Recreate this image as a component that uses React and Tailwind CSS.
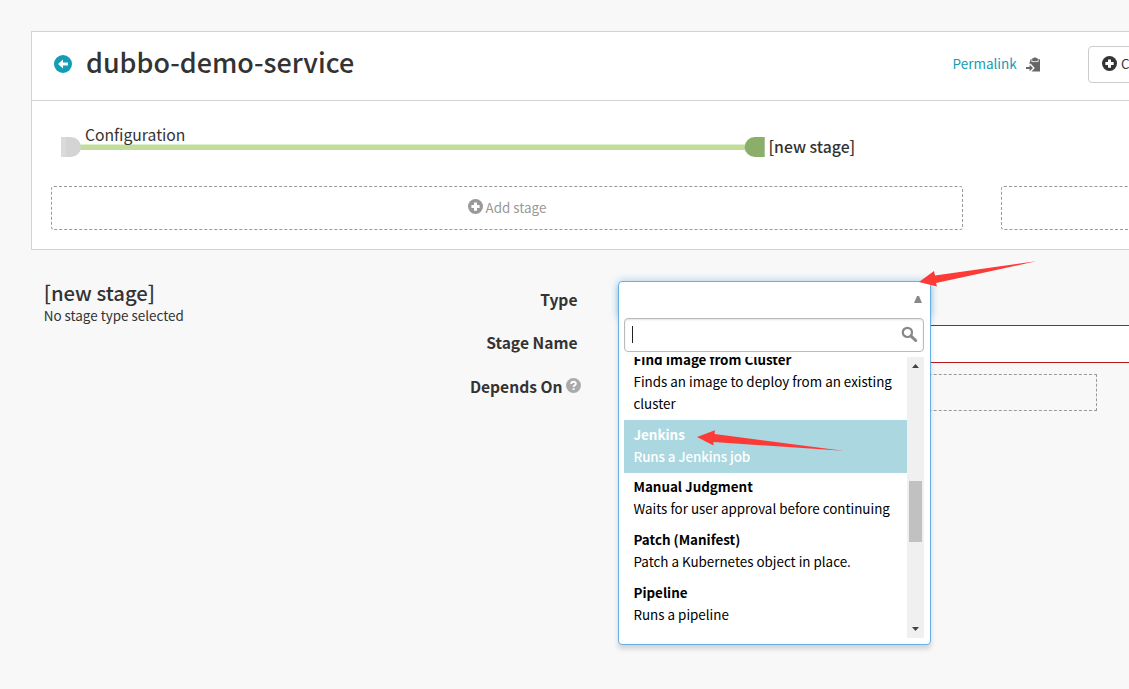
import React from "react";

const stages = [
  { name: "Find Image from Cluster", text: "Finds an image to deploy from an existing cluster" },
  { name: "Jenkins", text: "Runs a Jenkins job", active: true },
  { name: "Manual Judgment", text: "Waits for user approval before continuing" },
  { name: "Patch (Manifest)", text: "Patch a Kubernetes object in place." },
  { name: "Pipeline", text: "Runs a pipeline" },
];

function CircleIcon({ className, children }) {
  return (
    <svg viewBox="0 0 16 16" className={className}>
      <circle cx="8" cy="8" r="8" fill="currentColor" />
      {children}
    </svg>
  );
}

function Plus() {
  return <path d="M6.4 3.6h3.2v2.8h2.8v3.2H9.6v2.8H6.4V9.6H3.6V6.4h2.8z" fill="#fff" />;
}

function ClipboardIcon() {
  return (
    <svg viewBox="0 0 15 15" className="h-[15px] w-[15px] shrink-0">
      <path d="M4.6 2.2h1.6V1.3h1.3L8 .4h2l.6.9h1.2v.9H14V14.5H5.6L8.8 11 4.6 6.6 3.2 7z" fill="#666" />
      <path d="M5.8 2.6v2h6.4v-2" fill="none" stroke="#fff" strokeWidth=".8" />
      <path d="M0 10h3.6V7.8L7 11l-3.4 3.2V12H0z" fill="#666" />
    </svg>
  );
}

function Header() {
  return (
    <header className="flex h-[69px] items-center border-b border-[#d2d2d2] pb-[4px] pl-[22px]">
      <CircleIcon className="h-[18px] w-[18px] shrink-0 text-[#139cb6]">
        <path d="M8 4 3.6 8 8 12V9.3h4.4V6.7H8z" fill="#fff" />
      </CircleIcon>
      <h1 className="ml-[14px] w-[866.5px] shrink-0 pb-[4px] text-[26.9px] font-medium text-[#333]">dubbo-demo-service</h1>
      <span className="w-[73.5px] shrink-0 pb-[2px] text-[13.5px] text-[#139cb6]">Permalink</span>
      <ClipboardIcon />
      <button className="ml-[47px] flex h-[37px] w-[120px] shrink-0 items-center gap-[4px] rounded-[4px] border border-[#ccc] pb-[2px] pl-[13px] text-[13.4px] text-[#333]">
        <CircleIcon className="h-[15px] w-[15px] shrink-0">
          <Plus />
        </CircleIcon>
        Create
      </button>
    </header>
  );
}

function Graph() {
  return (
    <svg width="1098" height="85" viewBox="32 101 1098 85" className="block shrink-0">
      <path d="M80 147.3H746" stroke="#c0dd9b" strokeWidth="5.4" />
      <path d="M61 137h10a10 10 0 0 1 0 20H61z" fill="#d4d4d4" />
      <path d="M61 137h5v20h-5z" fill="#dadada" />
      <path d="M764.7 137h-10a10 10 0 0 0 0 20h10z" fill="#8bae6a" />
      <text x="85" y="141" fontSize="15.7" fill="#333">Configuration</text>
      <text x="768.5" y="153" fontSize="15.8" fontWeight="500" fill="#333">[new stage]</text>
    </svg>
  );
}

function Pipeline() {
  return (
    <section className="flex h-[219px] w-[1110px] flex-col border border-[#d2d2d2] bg-white">
      <Header />
      <Graph />
      <div className="flex pl-[19px]">
        <div className="flex h-[44px] w-[912px] shrink-0 items-center justify-center gap-[3px] rounded-[3px] border border-dashed border-[#999] pb-[1px] text-[13.4px] text-[#999]">
          <CircleIcon className="mb-[2px] h-[15px] w-[15px]">
            <Plus />
          </CircleIcon>
          Add stage
        </div>
        <div className="ml-[38px] h-[44px] w-[160px] shrink-0 rounded-[3px] border border-dashed border-[#999]" />
      </div>
    </section>
  );
}

function Dropdown() {
  return (
    <div className="absolute left-0 top-0 z-10 h-[364px] w-[313px]">
      <div className="absolute inset-x-0 top-0 h-[37px] rounded-[4px] shadow-[0_0_8px_rgba(102,175,233,0.6)]" />
      <div className="relative flex h-full flex-col rounded-[4px] border border-[#66afe9] bg-white px-[5px] shadow-[0_4px_5px_rgba(0,0,0,0.15)]">
        <div className="flex h-[36px] items-center justify-end pb-[1px] pr-[3px]">
          <svg viewBox="0 0 8 7" className="h-[7px] w-[8px]">
            <path d="M3 0h2l3 7H0z" fill="#888" />
          </svg>
        </div>
        <div className="flex h-[34px] w-[300px] shrink-0 items-center justify-between rounded-[4px] border border-[#bbb] pb-[2px] pl-[7px] pr-[5px] shadow-[inset_0_1px_2px_rgba(0,0,0,0.12)]">
          <span className="h-[17px] w-px bg-[#222]" />
          <svg viewBox="0 0 17 17" className="h-[17px] w-[17px]">
            <circle cx="6.4" cy="6.4" r="4.6" fill="none" stroke="#888" strokeWidth="2.2" />
            <path d="m9.8 9.8 4.9 4.7" stroke="#888" strokeWidth="3" strokeLinecap="round" />
          </svg>
        </div>
        <div className="mt-[5px] flex h-[281px] w-[300px]">
          <div className="flex h-[281px] w-[283px] flex-col justify-end overflow-hidden pb-[7.2px]">
            {stages.map((s) => (
              <div
                key={s.name}
                className={
                  s.active
                    ? "shrink-0 bg-[#abd7e0] px-[9.5px] pb-[5.4px] pt-[3.3px] text-[13.4px] leading-[22px] text-white"
                    : "shrink-0 px-[9.5px] pb-[6px] pt-[2.7px] text-[13.4px] leading-[22px] text-black"
                }
              >
                <div className="font-bold">{s.name}</div>
                <div className={s.active ? "font-medium tracking-[-0.12px]" : "font-normal"}>{s.text}</div>
              </div>
            ))}
          </div>
          <div className="flex w-[17px] flex-col items-center bg-[#f0f0f0]">
            <svg viewBox="0 0 7 4" className="mt-[7px] h-[4px] w-[7px]">
              <path d="M3.5 0 7 4H0z" fill="#444" />
            </svg>
            <div className="mt-[113px] h-[61px] w-[13px] bg-[#c1c1c1]" />
            <svg viewBox="0 0 7 4" className="mt-[85px] h-[4px] w-[7px]">
              <path d="M3.5 4 7 0H0z" fill="#444" />
            </svg>
          </div>
        </div>
      </div>
    </div>
  );
}

function Form() {
  return (
    <section className="flex pl-[12.7px] pt-[31px] text-[#333]">
      <div className="w-[368.3px]">
        <h2 className="-mt-[2px] mb-[1px] text-[20.3px] font-medium leading-[26px]">[new stage]</h2>
        <p className="text-[13.45px] leading-[18px]">No stage type selected</p>
      </div>
      <div className="w-[165.5px] pt-[7px] text-right text-[15.6px] font-bold leading-[22px]">
        <div>Type</div>
        <div className="mt-[21px]">Stage Name</div>
        <div className="-mr-[3.5px] mt-[22px] flex items-center justify-end gap-[3.5px]">
          Depends On
          <CircleIcon className="mb-[2px] h-[15px] w-[15px] text-[#aaa]">
            <path d="M5.6 6.4c0-3.2 4.9-3.2 4.9-.3 0 1.8-2.4 1.7-2.4 3.6M8.1 10.9v2" fill="none" stroke="#fff" strokeWidth="2" />
          </CircleIcon>
        </div>
      </div>
      <div className="relative ml-[40.5px] w-[511px] shrink-0">
        <Dropdown />
        <div className="mt-[44px] h-[38px] w-[540px] border border-[#b9191a] bg-white" />
        <div className="mt-[11px] h-[37px] w-[479px] border border-dashed border-[#999]" />
      </div>
    </section>
  );
}

export default function App() {
  return (
    <main className="relative h-[689px] w-[1129px] overflow-hidden bg-[#f8f8f8] pl-[31px] pt-[31px] font-['Noto_Sans_CJK_SC',sans-serif]">
      <Pipeline />
      <Form />
      <svg viewBox="0 0 1129 689" className="pointer-events-none absolute inset-0 z-20 h-[689px] w-[1129px]">
        <path d="M919 282 934 271 935 275.5 1036 261.3 936 283 937 286.5z" fill="#fc3a36" />
        <path d="M697 437 715 430.3 714.5 434 843 450.7 713.5 442 713.5 445.5z" fill="#fc3a36" />
      </svg>
    </main>
  );
}
